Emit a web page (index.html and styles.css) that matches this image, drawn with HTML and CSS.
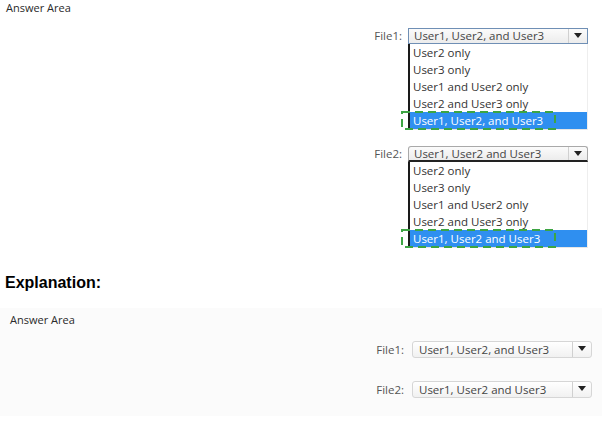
FILE: index.html
```html
<!DOCTYPE html>
<html>
<head>
<meta charset="utf-8">
<link rel="stylesheet" href="styles.css">
</head>
<body>
<div class="page">
  <section class="area">
    <div class="title">Answer Area</div>
    <div class="field">
      <span class="label">File1:</span>
      <div class="combo">
        <div class="box focused"><span class="value">User1, User2, and User3</span><span class="arrow"></span></div>
        <ul class="list">
          <li>User2 only</li>
          <li>User3 only</li>
          <li>User1 and User2 only</li>
          <li>User2 and User3 only</li>
          <li class="selected">User1, User2, and User3
            <svg class="mark" width="156" height="20" viewBox="0 0 156 20"><rect x="1" y="1" width="153" height="17" fill="none" stroke="#3da543" stroke-width="2" stroke-dasharray="8 5"/></svg>
          </li>
        </ul>
      </div>
    </div>
    <div class="field">
      <span class="label">File2:</span>
      <div class="combo">
        <div class="box open"><span class="value">User1, User2 and User3</span><span class="arrow"></span></div>
        <ul class="list">
          <li>User2 only</li>
          <li>User3 only</li>
          <li>User1 and User2 only</li>
          <li>User2 and User3 only</li>
          <li class="selected">User1, User2 and User3
            <svg class="mark" width="156" height="20" viewBox="0 0 156 20"><rect x="1" y="1" width="153" height="17" fill="none" stroke="#3da543" stroke-width="2" stroke-dasharray="8 5"/></svg>
          </li>
        </ul>
      </div>
    </div>
  </section>
  <h2 class="explain">Explanation:</h2>
  <section class="panel">
    <div class="title small">Answer Area</div>
    <div class="prow">
      <span class="label">File1:</span>
      <div class="box soft"><span class="value">User1, User2, and User3</span><span class="arrow"></span></div>
    </div>
    <div class="prow">
      <span class="label">File2:</span>
      <div class="box soft"><span class="value">User1, User2 and User3</span><span class="arrow"></span></div>
    </div>
  </section>
</div>
</body>
</html>
```
FILE: styles.css
```css
html, body {
  margin: 0;
  padding: 0;
  background: #ffffff;
}
.page {
  width: 616px;
  height: 421px;
  font-family: "Open Sans", "Noto Sans", sans-serif;
  color: #333333;
  overflow: hidden;
}
.area {
  padding: 0 28px 0 6px;
}
.title {
  font-size: 11px;
  line-height: 15px;
  color: #2a2a2a;
}
.field {
  display: flex;
  justify-content: flex-end;
  align-items: flex-start;
  margin-top: 13px;
}
.field + .field {
  margin-top: 16px;
}
.label {
  font-size: 11.5px;
  line-height: 16px;
  color: #555555;
  margin-right: 6px;
}
.combo {
  width: 180px;
}
.box {
  display: flex;
  height: 16px;
  box-sizing: border-box;
  border: 1px solid #a9a9a9;
  background: linear-gradient(#fbfbfb, #ececec);
  font-size: 11.5px;
  line-height: 14px;
  color: #444444;
}
.box.focused {
  border-color: #6f8fb5;
}
.box.open {
  border-bottom: 2px solid #222222;
  border-radius: 3px 3px 0 0;
}
.value {
  flex: 1;
  padding-left: 5px;
  white-space: nowrap;
  overflow: hidden;
}
.arrow {
  width: 18px;
  border-left: 1px solid #d0d0d0;
  position: relative;
}
.arrow::after {
  content: "";
  position: absolute;
  left: 5px;
  top: 4px;
  border-left: 4px solid transparent;
  border-right: 4px solid transparent;
  border-top: 5px solid #222222;
}
.list {
  list-style: none;
  margin: 0;
  padding: 0;
  border-left: 2px solid #1a1a1a;
  border-bottom: 1px solid #e6e6e6;
  border-right: 1px solid #eeeeee;
  background: #ffffff;
}
.list li {
  height: 17px;
  line-height: 17px;
  font-size: 11.5px;
  padding-left: 3px;
  color: #333333;
  white-space: nowrap;
  position: relative;
}
.list li.selected {
  background: #2f8ff0;
  color: #ffffff;
}
.mark {
  position: absolute;
  left: -9px;
  top: -1px;
}
.explain {
  margin: 25px 0 0 5px;
  font-family: "Liberation Sans", Arial, sans-serif;
  font-size: 16px;
  line-height: 20px;
  font-weight: bold;
  color: #000000;
}
.panel {
  margin-top: 15px;
  width: 602px;
  height: 108px;
  box-sizing: border-box;
  padding: 4px 10px 0 10px;
  background: #fbfbfb;
}
.title.small {
  font-size: 11px;
  line-height: 15px;
}
.prow {
  display: flex;
  justify-content: flex-end;
  margin-top: 14px;
}
.prow + .prow {
  margin-top: 23px;
}
.prow .label {
  line-height: 17px;
  margin-right: 8px;
}
.box.soft {
  width: 180px;
  height: 17px;
  border-color: #d6d6d6;
  border-radius: 3px;
  background: linear-gradient(#ffffff, #f1f1f1);
  line-height: 15px;
}
.box.soft .value {
  padding-left: 6px;
}
```
